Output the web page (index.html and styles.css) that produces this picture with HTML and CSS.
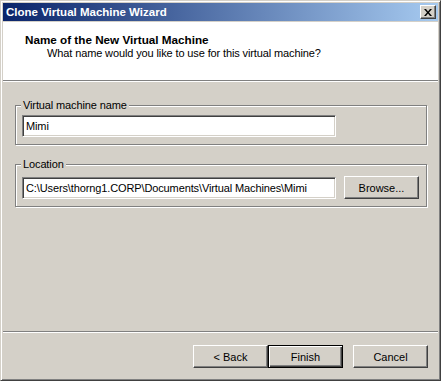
FILE: index.html
```html
<!DOCTYPE html>
<html lang="en">
<head>
    <meta charset="UTF-8">
    <title>Clone Virtual Machine Wizard</title>
    <link rel="stylesheet" href="styles.css">
</head>
<body>
    <div class="window">
        <div class="titlebar">
            <span class="title">Clone Virtual Machine Wizard</span>
            <button class="close" aria-label="Close">
                <svg width="8" height="7" viewBox="0 0 8 7">
                    <path d="M0 0h2l2 2.5L6 0h2L5 3.5 8 7H6L4 4.5 2 7H0l3-3.5z" fill="#000"/>
                </svg>
            </button>
        </div>

        <div class="header">
            <h1>Name of the New Virtual Machine</h1>
            <p>What name would you like to use for this virtual machine?</p>
        </div>
        <div class="sep"></div>

        <div class="content">
            <div class="group">
                <span class="group-label">Virtual machine name</span>
                <input class="field name-field" type="text" value="Mimi">
            </div>
            <div class="group location">
                <span class="group-label">Location</span>
                <div class="row">
                    <input class="field" type="text" value="C:\Users\thorng1.CORP\Documents\Virtual Machines\Mimi">
                    <button class="btn">Browse...</button>
                </div>
            </div>
        </div>

        <div class="sep"></div>
        <div class="footer">
            <button class="btn">&lt; Back</button>
            <button class="btn default">Finish</button>
            <button class="btn cancel">Cancel</button>
        </div>
    </div>
</body>
</html>
```

FILE: styles.css
```css
* {
    box-sizing: border-box;
}
body {
    margin: 0;
    font-family: "Liberation Sans", Arial, sans-serif;
    font-size: 11px;
    letter-spacing: -0.12px;
    background: #d4d0c8;
}
.window {
    width: 441px;
    height: 381px;
    display: flex;
    flex-direction: column;
    background: #d4d0c8;
    border: 1px solid;
    border-color: #d4d0c8 #404040 #404040 #d4d0c8;
    box-shadow: inset 1px 1px 0 #fff, inset -1px -1px 0 #808080;
    padding: 2px;
}

/* caption */
.titlebar {
    height: 18px;
    display: flex;
    align-items: center;
    justify-content: space-between;
    padding: 0 2px 0 3px;
    background: linear-gradient(to right, #0a246a, #a6caf0);
    margin-bottom: 1px;
}
.title {
    color: #fff;
    font-weight: bold;
    font-size: 11.5px;
    letter-spacing: 0;
}
.close {
    width: 16px;
    height: 14px;
    padding: 0;
    display: flex;
    align-items: center;
    justify-content: center;
    background: #d4d0c8;
    border: 1px solid;
    border-color: #fff #404040 #404040 #fff;
    box-shadow: inset -1px -1px 0 #808080;
}

/* header */
.header {
    background: #fff;
    height: 58px;
    padding: 11px 0 0 22px;
}
.header h1 {
    margin: 0;
    font-size: 11.7px;
    line-height: 13px;
    font-weight: bold;
    letter-spacing: 0;
    color: #000;
}
.header p {
    margin: 1px 0 0 22px;
    line-height: 13px;
    color: #000;
}
.sep {
    height: 2px;
    border-top: 1px solid #808080;
    border-bottom: 1px solid #fff;
}

/* body */
.content {
    flex: 1;
    padding: 23px 11px 0 12px;
}
.group {
    position: relative;
    border: 1px solid #808080;
    box-shadow: inset 1px 1px 0 #fff, 1px 1px 0 #fff;
    padding: 9px 6px 7px 6px;
}
.group.location {
    margin-top: 19px;
    padding-top: 11px;
    padding-bottom: 7px;
}
.group-label {
    position: absolute;
    top: -7px;
    left: 5px;
    padding: 0 2px;
    line-height: 13px;
    background: #d4d0c8;
}
.field {
    display: block;
    width: 314px;
    height: 22px;
    padding: 0 3px;
    font-family: inherit;
    font-size: 11px;
    letter-spacing: -0.12px;
    color: #000;
    background: #fff;
    border: 1px solid;
    border-color: #808080 #fff #fff #808080;
    box-shadow: inset 1px 1px 0 #404040, inset -1px -1px 0 #d4d0c8;
    outline: none;
}
.row {
    display: flex;
    align-items: center;
    gap: 8px;
}

/* buttons */
.btn {
    width: 75px;
    height: 23px;
    padding: 0;
    flex-shrink: 0;
    font-family: inherit;
    font-size: 11px;
    color: #000;
    background: #d4d0c8;
    border: 1px solid;
    border-color: #fff #404040 #404040 #fff;
    box-shadow: inset -1px -1px 0 #808080;
}
.btn.default {
    border: 1px solid #000;
    box-shadow: inset 1px 1px 0 #fff, inset -1px -1px 0 #404040, inset -2px -2px 0 #808080;
}
.footer {
    display: flex;
    justify-content: flex-end;
    padding: 12px 10px 0 0;
    height: 45px;
}
.btn.cancel {
    margin-left: 10px;
}
```
